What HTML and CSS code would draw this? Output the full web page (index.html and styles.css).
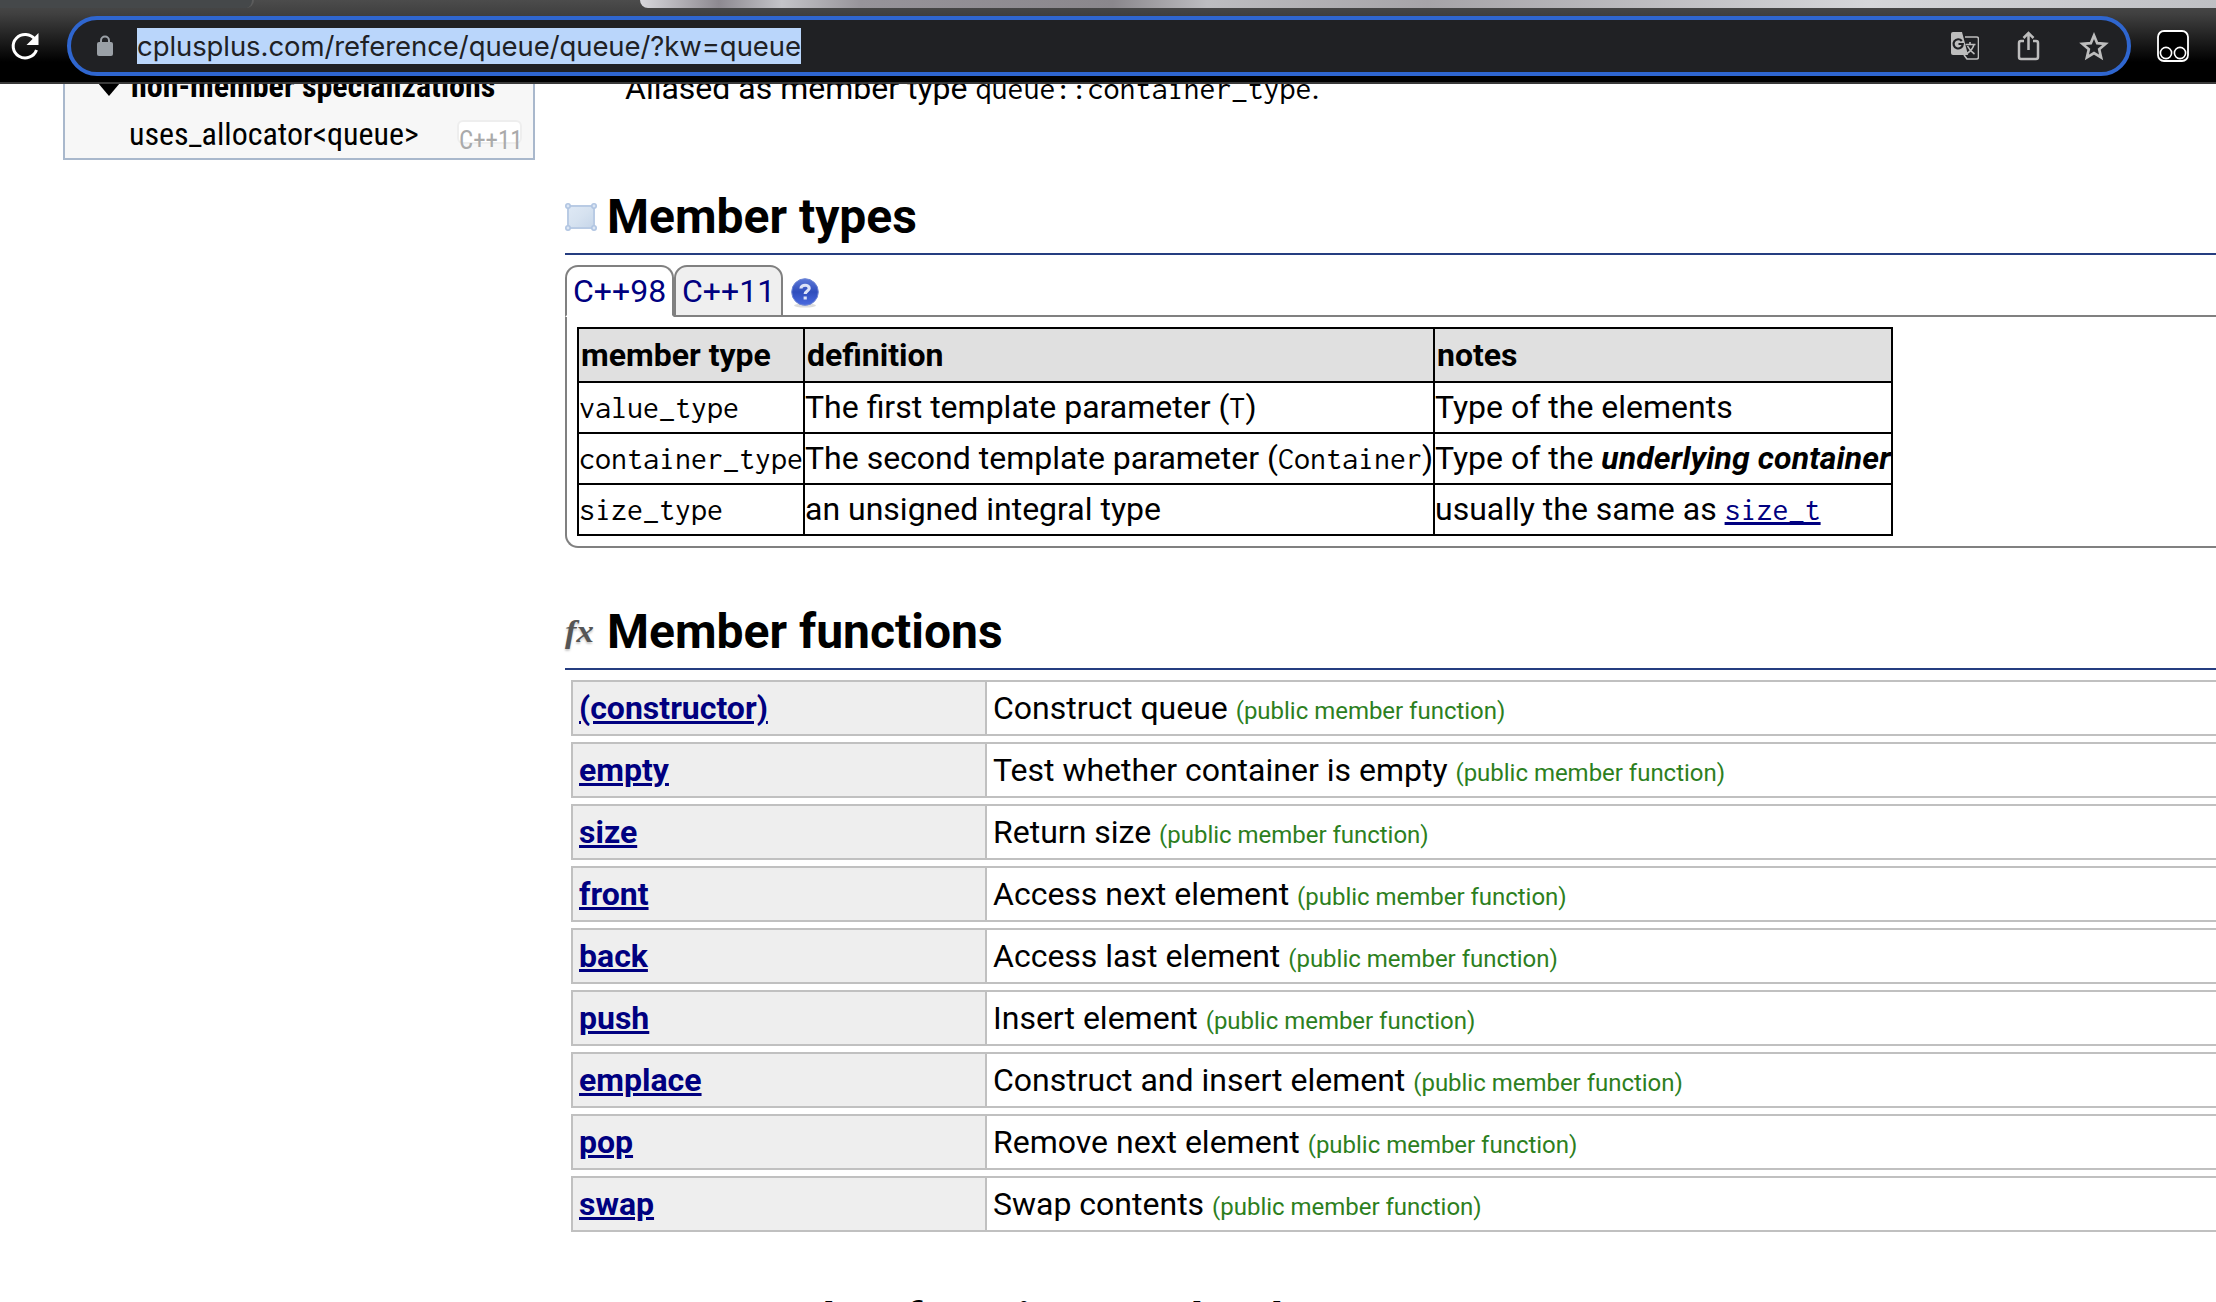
FILE: index.html
```html
<!DOCTYPE html>
<html lang="en">
<head>
<meta charset="utf-8">
<title>queue - C++ Reference</title>
<link rel="stylesheet" href="styles.css">
</head>
<body>
<header class="browser">
  <div class="tabstrip"><span class="tab-edge"></span><span class="theme-art"></span></div>
  <div class="toolbar">
    <svg class="reload" viewBox="0 0 32 32" width="32" height="32"><path d="M25 9.500A12 11.700 0 1 0 26.500 20" fill="none" stroke="#fff" stroke-width="3"/><path d="M28.500 3v12H16.500z" fill="#fff"/></svg>
    <div class="omnibox">
      <svg class="lock" viewBox="0 0 16 22" width="16" height="22"><path d="M4 9V5.500a4 4 0 0 1 8 0V9" fill="none" stroke="#9aa0a6" stroke-width="2"/><rect x="0" y="7" width="16" height="14" rx="2" fill="#9aa0a6"/></svg>
      <span class="url">cplusplus.com/reference/queue/queue/?kw=queue</span>
      <span class="actions">
        <svg viewBox="0 0 28 28" width="28" height="28"><path d="M14 5h11.500a2 2 0 0 1 2 2v18a2 2 0 0 1-2 2H16l-3-4" fill="none" stroke="#bdbdbd" stroke-width="1.600"/><path d="M2 0h9l6 23H2a2 2 0 0 1-2-2V2a2 2 0 0 1 2-2z" fill="#bdbdbd"/><path d="M10.800 9A4.600 4.600 0 1 0 11.800 12H7.500" fill="none" stroke="#202124" stroke-width="2.200"/><path d="M14.500 12.500h10M19 10v2.500M23 12.500c-1 4-4 7-7 9M16.500 14c2 4 4 6 7 8" fill="none" stroke="#bdbdbd" stroke-width="1.600"/></svg>
        <svg viewBox="0 0 24 30" width="24" height="30"><path d="M7 10H4a2 2 0 0 0-2 2v14a2 2 0 0 0 2 2h15a2 2 0 0 0 2-2V12a2 2 0 0 0-2-2h-3M11.500 19V2M6.500 7l5-5 5 5" fill="none" stroke="#bdbdbd" stroke-width="2.500"/></svg>
        <svg viewBox="0 0 30 29" width="30" height="29"><path d="M15 3.500l3.200 7.700 8.300.7-6.300 5.400 1.900 8.100-7.100-4.300-7.100 4.300 1.900-8.100-6.300-5.400 8.300-.7z" fill="none" stroke="#bdbdbd" stroke-width="2.700"/></svg>
      </span>
    </div>
    <svg class="extension" viewBox="0 0 32 32" width="32" height="32"><rect x="1" y="1" width="30" height="30" rx="6" fill="#000" stroke="#fff" stroke-width="1.800"/><circle cx="9" cy="23" r="5.600" fill="none" stroke="#fff" stroke-width="1.600"/><circle cx="23" cy="23" r="5.600" fill="none" stroke="#fff" stroke-width="1.600"/></svg>
  </div>
</header>
<div class="page">
  <aside class="sidebar">
    <div class="side-title"><span class="arrow"></span><b class="cond">non-member specializations</b></div>
    <div class="side-item"><span class="cond">uses_allocator&lt;queue&gt;</span><span class="badge cond">C++11</span></div>
  </aside>
  <main class="content">
    <p class="alias">Aliased as member type <code>queue::container_type</code>.</p>
    <section class="types">
      <h2><svg viewBox="0 0 32 28" width="32" height="28"><defs><linearGradient id="box" x1="0" y1="0" x2="1" y2="1"><stop offset="0" stop-color="#dfe9f5"/><stop offset=".5" stop-color="#d6e2f0"/><stop offset="1" stop-color="#c6d6e9"/></linearGradient></defs><rect x="3" y="3" width="26" height="22" fill="url(#box)" stroke="#b9cbe4" stroke-width="2"/><g fill="#dbe6f4" stroke="#b1c5e2" stroke-width="1.600"><circle cx="3" cy="3" r="2.200"/><circle cx="29" cy="3" r="2.200"/><circle cx="3" cy="25" r="2.200"/><circle cx="29" cy="25" r="2.200"/></g></svg><span>Member types</span></h2>
      <div class="tabs"><a class="tab active">C++98</a><a class="tab">C++11</a>
        <svg class="help" viewBox="0 0 28 30" width="28" height="30"><defs><linearGradient id="ball" x1="0" y1="0" x2="0" y2="1"><stop offset="0" stop-color="#5b78d8"/><stop offset=".5" stop-color="#2f4dbc"/><stop offset="1" stop-color="#4a6ae0"/></linearGradient></defs><ellipse cx="14" cy="27.500" rx="11" ry="2" fill="#ddd"/><circle cx="14" cy="14" r="13.300" fill="url(#ball)" stroke="#6f86d4"/><path d="M10 10.500c0-4.500 8.200-4 8.200-.3 0 2.800-4 2.800-4 5.800M14.200 18.500v3" fill="none" stroke="#dde3f7" stroke-width="3.200"/></svg>
      </div>
      <div class="panel">
        <table class="defs">
          <colgroup><col class="c1"><col class="c2"><col class="c3"></colgroup>
          <tr><th>member type</th><th>definition</th><th>notes</th></tr>
          <tr><td><code>value_type</code></td><td>The first template parameter (<code>T</code>)</td><td>Type of the elements</td></tr>
          <tr><td><code>container_type</code></td><td>The second template parameter (<code>Container</code>)</td><td>Type of the <b class="term"><i>underlying container</i></b></td></tr>
          <tr><td><code>size_type</code></td><td>an unsigned integral type</td><td>usually the same as <a class="link"><code>size_t</code></a></td></tr>
        </table>
      </div>
    </section>
    <section class="functions">
      <h2><span class="fx"><span>fx</span></span><span>Member functions</span></h2>
      <dl class="list">
        <div class="row"><dt><a class="link">(constructor)</a></dt><dd>Construct queue <small>(public member function)</small></dd></div>
        <div class="row"><dt><a class="link">empty</a></dt><dd>Test whether container is empty <small>(public member function)</small></dd></div>
        <div class="row"><dt><a class="link">size</a></dt><dd>Return size <small>(public member function)</small></dd></div>
        <div class="row"><dt><a class="link">front</a></dt><dd>Access next element <small>(public member function)</small></dd></div>
        <div class="row"><dt><a class="link">back</a></dt><dd>Access last element <small>(public member function)</small></dd></div>
        <div class="row"><dt><a class="link">push</a></dt><dd>Insert element <small>(public member function)</small></dd></div>
        <div class="row"><dt><a class="link">emplace</a></dt><dd>Construct and insert element <small>(public member function)</small></dd></div>
        <div class="row"><dt><a class="link">pop</a></dt><dd>Remove next element <small>(public member function)</small></dd></div>
        <div class="row"><dt><a class="link">swap</a></dt><dd>Swap contents <small>(public member function)</small></dd></div>
      </dl>
    </section>
    <section class="overloads">
      <h2><span class="fx"><span>fx</span></span><span>Non-member function overloads</span></h2>
    </section>
  </main>
</div>
</body>
</html>
```
FILE: styles.css
```css
* { box-sizing: border-box; }
body { margin: 0; height: 1302px; overflow: hidden; background: #fff; color: #000; font: 32px/38px Roboto, sans-serif; display: flex; flex-direction: column; }
svg { display: block; flex: none; }

.browser { flex: none; height: 84px; border-bottom: 2px solid #3a3a3a; display: flex; flex-direction: column; background: linear-gradient(#4c4c4c, #404040 14px, #000 62px); }
.tabstrip { height: 8px; display: flex; justify-content: space-between; }
.tab-edge { width: 254px; background: #45484a; border-radius: 0 0 14px 0; border-right: 2px solid #5c5c5c; }
.theme-art { width: 1576px; border-radius: 0 0 0 14px; background: linear-gradient(90deg, #d8d8dc, #8d8990 5%, #c4c4c8 9%, #97949a 14%, #8a878c 30%, #bdbdc0 36%, #a6a4a8 50%, #d5d6d9 78%, #bfc0c4); }
.toolbar { flex: 1; display: flex; align-items: center; }
.reload { margin: 2px 0 0 10px; }
.omnibox { width: 2064px; height: 60px; margin: 2px 0 0 25px; border: 4px solid #2f66cf; border-radius: 30px; background: #202124; display: flex; align-items: center; padding: 0 18px 0 26px; }
.url { margin-left: 24px; background: #bad6fb; color: #202124; font: 27.5px/36px Inter, sans-serif; letter-spacing: -0.08px; height: 36px; white-space: nowrap; }
.actions { margin-left: auto; display: flex; align-items: center; gap: 38px; }
.extension { margin: 2px 0 0 26px; }

.page { flex: 1; min-height: 0; overflow: hidden; display: flex; align-items: flex-start; padding-left: 63px; }
.sidebar { width: 472px; height: 76px; border: 2px solid #a9b8cc; border-top: 0; background: #f7f7f7; flex: none; }
.cond { font-family: "Roboto Condensed", Roboto, sans-serif; font-stretch: 75%; white-space: nowrap; }
.side-title { display: flex; align-items: center; margin-top: -17px; height: 38px; padding-left: 33px; gap: 11px; }
.arrow { border: 11px solid transparent; border-top: 13px solid #000; border-bottom: 0; margin-top: 7px; }
.side-item { display: flex; padding-left: 64px; justify-content: space-between; margin-top: 10px; padding-right: 11px; }
.badge { width: 65px; height: 24px; margin-top: 5px; border: 2px solid #eee; border-radius: 6px; background: #fff; color: #aaa; font-size: 25px; line-height: 37px; }

.content { width: 1651px; flex: none; margin-left: 30px; }
.alias { margin: -15px 0 0 60px; white-space: nowrap; }
code { font-family: Inconsolata, "DejaVu Sans Mono", monospace; font-size: 32px; line-height: 1; }
h2 { margin: 0; height: 74px; border-bottom: 2px solid #253d80; font: bold 48px/70px Roboto, sans-serif; display: flex; align-items: center; gap: 10px; white-space: nowrap; }
.types { margin-top: 74px; }
.tabs { display: flex; margin-top: 10px; height: 52px; align-items: stretch; }
.tab { width: 109px; border: 2px solid gray; border-radius: 13px 13px 0 0; color: navy; background: #efefef; padding: 5px 0 0 6px; }
.tab.active { background: #fff; border-bottom-color: #fff; position: relative; }
.help { margin: 13px 0 0 8px; }
.panel { height: 233px; margin-top: -2px; border: 2px solid gray; border-right: 0; border-radius: 0 0 0 13px; padding: 10px; }
.defs { border-collapse: collapse; table-layout: fixed; width: 1314px; }
.c1 { width: 226px; } .c2 { width: 630px; } .c3 { width: 458px; }
.defs th, .defs td { border: 2px solid #000; padding: 0 0 1px; height: 51px; text-align: left; white-space: nowrap; }
.defs th { height: 54px; background: #e0e0e0; padding: 0 0 0 2px; }
.term { letter-spacing: 0.1px; }
.link { color: navy; text-decoration: underline; }
.functions { margin-top: 48px; }
.fx { width: 32px; color: #555; font: italic bold 31px/66px "Liberation Serif", serif; text-shadow: 0 2px 2px #ccc; }
.fx span { display: inline-block; transform: scaleX(1.12); transform-origin: left; }
.list { margin: 10px 0 0 6px; display: grid; gap: 6px; }
.row { height: 56px; border: 2px solid #c0c0c0; border-right: 0; display: flex; white-space: nowrap; line-height: 52px; }
dt { width: 414px; border-right: 2px solid #c0c0c0; background: #eee; padding-left: 6px; font-weight: bold; }
dd { margin: 0; padding-left: 6px; }
small { font-size: 24px; letter-spacing: -0.02px; color: #2d7f1e; }
.overloads { margin-top: 53px; }
```
